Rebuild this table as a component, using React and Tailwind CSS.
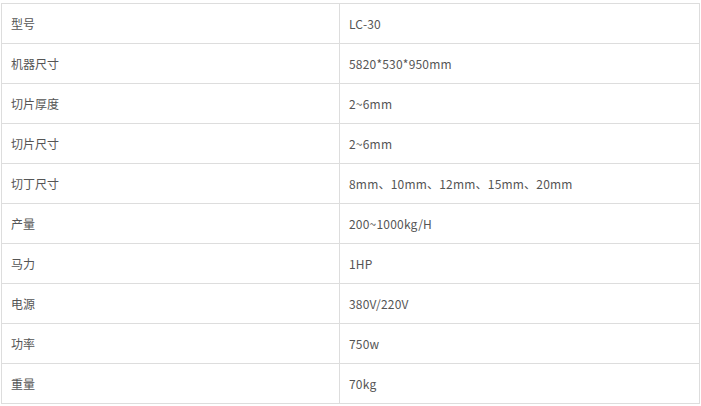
import React from 'react';

const rows = [
  ['型号', 'LC-30'],
  ['机器尺寸', '5820*530*950mm'],
  ['切片厚度', '2~6mm'],
  ['切片尺寸', '2~6mm'],
  ['切丁尺寸', '8mm、10mm、12mm、15mm、20mm'],
  ['产量', '200~1000kg/H'],
  ['马力', '1HP'],
  ['电源', '380V/220V'],
  ['功率', '750w'],
  ['重量', '70kg'],
];

const App = () => {
  return (
    <div className="min-h-screen bg-white pl-px pt-[3px]">
      <div
        className="w-[699px] border-l border-t border-[#dddddd] text-[12px] text-[#555555]"
        style={{ fontFamily: '"Noto Sans CJK SC", "Liberation Sans", sans-serif' }}
      >
        {rows.map(([label, value]) => (
          <div key={label} className="grid grid-cols-[338px_360px]">
            <div className="flex h-10 items-center border-b border-r border-[#dddddd] pl-[9px] pt-px">
              {label}
            </div>
            <div className="flex h-10 items-center border-b border-r border-[#dddddd] pl-[9px] pt-px tracking-[0.2px]">
              {value}
            </div>
          </div>
        ))}
      </div>
    </div>
  );
};

export default App;
